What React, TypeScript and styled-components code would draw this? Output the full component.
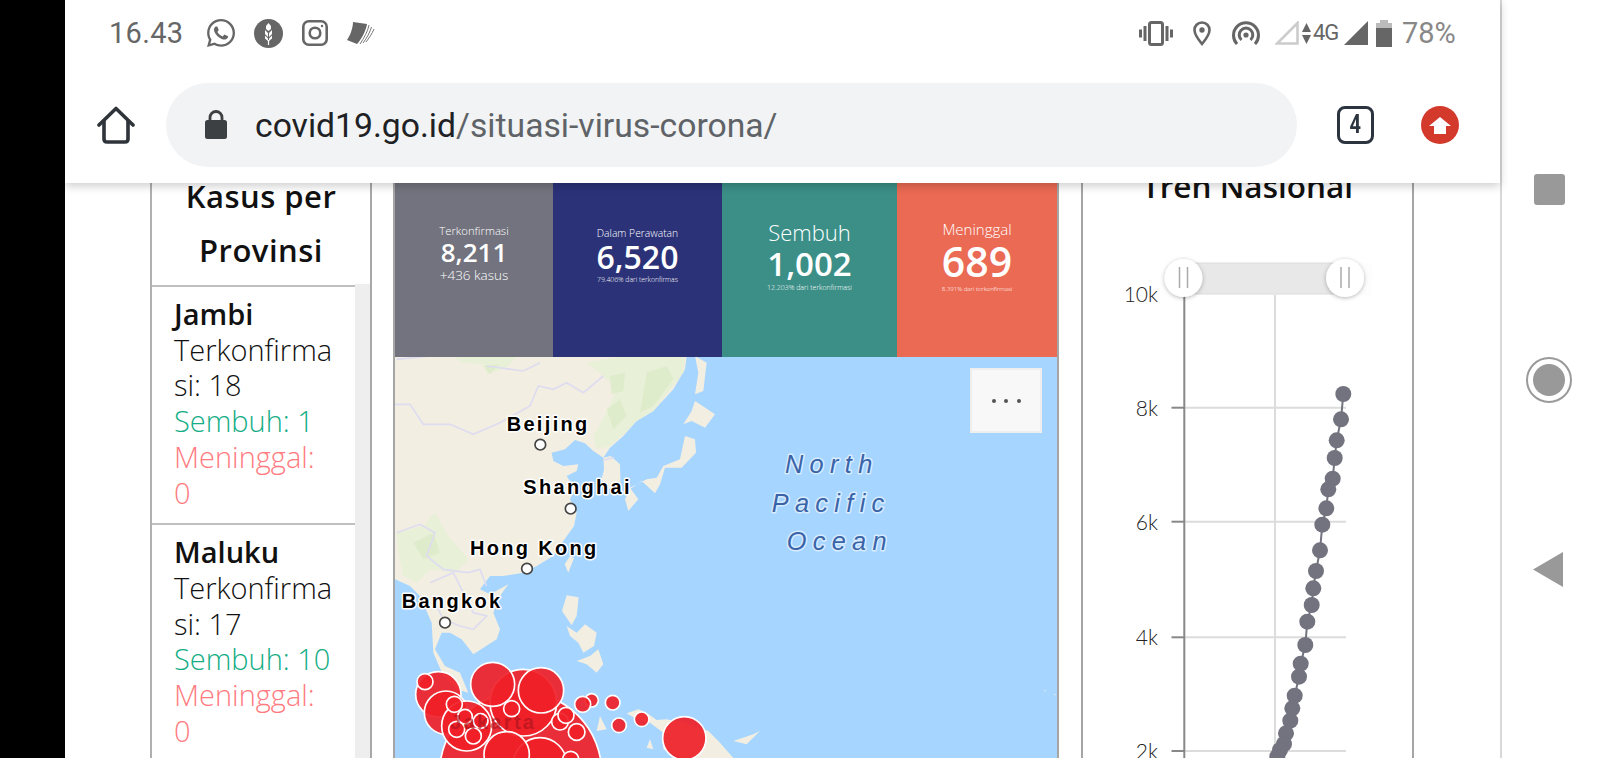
import React from "react";
import styled, { createGlobalStyle } from "styled-components";
import { FaWhatsapp } from "react-icons/fa";

const Global = createGlobalStyle`
  html, body { margin: 0; padding: 0; background: #fff; overflow: hidden; }
  * { box-sizing: border-box; }
`;

const Screen = styled.div`
  display: flex;
  width: 1600px;
  height: 758px;
  overflow: hidden;
  font-family: "Open Sans", "Liberation Sans", sans-serif;
`;
const BlackBar = styled.div`
  width: 65px;
  background: #000;
`;
const Phone = styled.div`
  display: flex;
  flex-direction: column;
  width: 1437px;
  border-right: 2px solid #d8d8d8;
`;
const Chrome = styled.header`
  position: relative;
  z-index: 2;
  height: 183px;
  flex: none;
  background: #fff;
  box-shadow: 0 3px 9px rgba(0, 0, 0, 0.2);
`;
const StatusBar = styled.div`
  display: flex;
  align-items: center;
  justify-content: space-between;
  height: 66px;
  padding: 0 44px 0 44px;
`;
const StatusGroup = styled.div`
  display: flex;
  align-items: center;
`;
const Time = styled.span`
  font: 400 29px/1 Roboto, sans-serif;
  letter-spacing: 0.3px;
  color: #666;
  width: 72px;
  margin-right: 25px;
`;
const Slot = styled.span<{ $gap?: number; $w: number }>`
  display: flex;
  width: ${(p) => p.$w}px;
  margin-right: ${(p) => p.$gap ?? 0}px;
  color: #666;
`;
const NetText = styled.span`
  font: 400 22px/1 Roboto, sans-serif;
  letter-spacing: -1.2px;
  color: #666;
  width: 26px;
  margin-right: 5px;
`;
const Percent = styled.span`
  font: 400 29px/1 Roboto, sans-serif;
  color: #888;
  width: 54px;
`;
const Toolbar = styled.div`
  display: flex;
  align-items: center;
  height: 85px;
  margin-top: 16px;
  padding-left: 32px;
`;
const HomeSlot = styled.span`
  display: flex;
  width: 38px;
  margin-right: 31px;
`;
const Omnibox = styled.div`
  display: flex;
  align-items: center;
  width: 1131px;
  height: 84px;
  border-radius: 42px;
  background: #f1f3f4;
  padding-left: 39px;
`;
const LockSlot = styled.span`
  display: flex;
  margin-right: 28px;
`;
const Url = styled.span`
  font: 400 33.7px/1 Roboto, sans-serif;
  padding-top: 2px;
  color: #5f6368;
  b { font-weight: 400; color: #202124; }
`;
const TabCount = styled.span`
  display: flex;
  align-items: center;
  justify-content: center;
  width: 37px;
  height: 38px;
  margin-left: 40px;
  border: 3px solid #2c3440;
  border-radius: 8px;
  color: #2c3440;
`;
const TabDigit = styled.span`
  display: block;
  font: 700 25px/1 Roboto, sans-serif;
  transform: scaleX(0.8);
`;
const UpdateBadge = styled.span`
  display: flex;
  width: 38px;
  height: 38px;
  margin-left: 47px;
  border-radius: 50%;
  background: #d33a2c;
`;

const Content = styled.main`
  flex: 1;
  min-height: 0;
  display: flex;
  padding-left: 85px;
  overflow: hidden;
`;
const ProvincePanel = styled.section`
  width: 222px;
  margin-right: 21px;
  border-left: 2px solid #b0b0b0;
  border-right: 2px solid #a8a8a8;
  display: flex;
  flex-direction: column;
`;
const PanelTitle = styled.h2`
  margin: -14px 0 0;
  padding: 0 0 8px;
  text-align: center;
  font: 600 31px/54px "Open Sans", sans-serif;
  letter-spacing: 0.5px;
  color: #111;
  border-bottom: 2px solid #c0c0c0;
`;
const ListArea = styled.div`
  flex: 1;
  display: flex;
  min-height: 0;
`;
const Rows = styled.div`
  flex: 1;
  min-width: 0;
`;
const Scrollbar = styled.div`
  width: 15px;
  margin-top: -3px;
  background: #eeeeee;
  position: relative;
`;
const ProvinceRow = styled.article`
  padding: 9px 22px 13px 22px;
  border-bottom: 2px solid #c0c0c0;
  font: 300 29px/35.7px "Open Sans", sans-serif;
  color: #111;
  overflow-wrap: anywhere;
`;
const ProvinceName = styled.div`
  font-weight: 600;
`;
const Recovered = styled.div`
  color: #14ad85;
`;
const Deceased = styled.div`
  color: #ff7b7f;
`;

const MapPanel = styled.section`
  width: 666px;
  margin-right: 22px;
  border-left: 2px solid #a5a5a5;
  border-right: 2px solid #a5a5a5;
  display: flex;
  flex-direction: column;
`;
const StatRow = styled.div`
  display: flex;
  height: 174px;
  flex: none;
`;
const Tile = styled.div<{ $bg: string; $w: number; $top: number }>`
  width: ${(p) => p.$w}px;
  background: ${(p) => p.$bg};
  color: #fff;
  padding-top: ${(p) => p.$top}px;
  display: flex;
  flex-direction: column;
  align-items: center;
  text-align: center;
  white-space: nowrap;
`;
const TileLabel = styled.div<{ $size: number }>`
  font: 300 ${(p) => p.$size}px/1.2 "Open Sans", sans-serif;
`;
const TileValue = styled.div<{ $size: number; $weight: number }>`
  font: ${(p) => p.$weight} ${(p) => p.$size}px/1.15 "Open Sans", sans-serif;
`;
const TileNote = styled.div<{ $size: number }>`
  font: 300 ${(p) => p.$size}px/1.3 "Open Sans", sans-serif;
`;
const MapFrame = styled.div`
  position: relative;
  flex: 1;
  background: #a6d5ff;
  overflow: hidden;
`;
const MapSvg = styled.svg`
  display: block;
`;
const MenuButton = styled.button`
  position: absolute;
  top: 11px;
  right: 15px;
  width: 72px;
  height: 65px;
  display: flex;
  align-items: center;
  justify-content: center;
  gap: 8.5px;
  padding: 0;
  background: #f8f8f8;
  border: 2px solid #eeeeee;
`;
const MenuDot = styled.span`
  width: 4px;
  height: 4px;
  border-radius: 50%;
  background: #555;
`;

const TrendPanel = styled.section`
  width: 333px;
  border-left: 2px solid #a5a5a5;
  border-right: 2px solid #a5a5a5;
  display: flex;
  flex-direction: column;
`;
const TrendTitle = styled.h2`
  margin: -12px 0 0;
  text-align: center;
  font: 600 31.5px/30px "Open Sans", sans-serif;
  color: #111;
`;
const ChartSvg = styled.svg`
  display: block;
  flex: none;
`;

const NavBar = styled.nav`
  flex: 1;
  display: flex;
  flex-direction: column;
  align-items: center;
  padding: 174px 4px 0 0;
`;
const NavSquare = styled.div`
  width: 31px;
  height: 31px;
  border-radius: 3px;
  background: #999;
`;
const NavRing = styled.div`
  width: 46px;
  height: 46px;
  margin-top: 152px;
  border-radius: 50%;
  border: 2px solid #9a9a9a;
  display: flex;
  align-items: center;
  justify-content: center;
`;
const NavDot = styled.div`
  width: 32px;
  height: 32px;
  border-radius: 50%;
  background: #999;
`;
const NavBack = styled.svg`
  margin-top: 149px;
  margin-right: 2px;
`;

const provinces = [
  { name: "Jambi", conf: "18", rec: "1", dead: "0" },
  { name: "Maluku", conf: "17", rec: "10", dead: "0" },
];

const dots: [number, number][] = [
  [1343.3, 394], [1341, 419.3], [1336.7, 440.3], [1334.7, 458], [1332.7, 478.7],
  [1328.3, 489.3], [1326.3, 508.3], [1322.3, 524.7], [1320, 550.3], [1316, 571],
  [1313.3, 588.3], [1311.7, 605], [1307.3, 621.7], [1305.3, 645], [1300.7, 663.7],
  [1299, 676.7], [1294.7, 695.7], [1292.3, 708.3], [1290.3, 720.7], [1286, 733.3],
  [1284, 744], [1280, 750], [1277.3, 756.7], [1274, 766],
];

const gridY = [407.7, 521.7, 637.3, 751];
const axisLabels: [string, number][] = [
  ["10k", 302], ["8k", 415.5], ["6k", 529.5], ["4k", 645], ["2k", 759],
];

const bubbles: [number, number, number][] = [
  [392, 1250, 243], [145, 1015, 68], [400, 1040, 100], [168, 1070, 65], [230, 1110, 75],
  [450, 1225, 80], [308, 985, 66], [453, 1003, 68], [350, 1195, 68], [883, 1147, 65],
  [605, 1033, 20], [668, 1040, 22], [578, 1045, 24], [687, 1108, 22], [755, 1090, 22],
  [510, 1097, 25], [528, 1078, 24], [560, 1128, 25], [365, 1058, 24], [105, 977, 24],
  [193, 1045, 24], [225, 1082, 22], [272, 1095, 22], [200, 1120, 24], [250, 1140, 24],
  [542, 1210, 24],
];

const MapDrawing = () => (
  <MapSvg width={662} height={401} viewBox="395 357 662 401">
    <g transform="translate(390 356) scale(0.33333)">
      <g fill="#f3eee2">
        <path d="M15 0 L890 0 L885 40 L850 100 L790 165 L740 195 L700 240 L660 275 L640 305 L610 285 L585 262 L555 252 L525 280 L485 290 L490 315 L520 330 L565 325 L560 345 L530 360 L555 400 L540 430 L560 470 L552 510 L520 555 L490 600 L440 630 L400 650 L340 660 L300 660 L270 700 L300 715 L355 685 L330 720 L310 770 L330 820 L320 850 L250 895 L215 850 L180 830 L155 830 L135 880 L165 930 L210 950 L235 1010 L200 1000 L160 960 L130 890 L125 800 L90 720 L60 690 L15 670Z" />
        <path d="M640 305 L662 300 L690 325 L692 395 L650 398 L635 370 L642 340Z" />
        <path d="M915 135 L975 175 L945 215 L905 195 L880 205 L905 165Z" />
        <path d="M885 240 L915 250 L918 290 L875 335 L825 335 L810 385 L795 412 L755 375 L722 398 L745 430 L715 465 L705 430 L720 395 L770 370 L800 365 L820 330 L870 310Z" />
        <path d="M915 0 L950 20 L940 105 L915 115 L925 50Z" />
        <path d="M540 600 L552 606 L535 650 L524 625Z" />
        <path d="M530 718 L566 724 L560 780 L545 808 L516 765Z" />
        <path d="M530 810 L560 830 L585 805 L620 830 L612 870 L580 890 L565 860 L540 840Z" />
        <path d="M560 915 L600 900 L625 880 L640 925 L620 950 L590 925Z" />
        <path d="M710 1072 L745 1060 L770 1070 L800 1092 L830 1090 L880 1100 L955 1125 L990 1160 L1030 1206 L880 1206 L820 1180 L820 1130 L780 1100 L740 1090Z" />
        <path d="M1030 1155 L1090 1135 L1110 1125 L1070 1165Z" />
        <path d="M630 1080 L650 1120 L620 1125Z" />
        <path d="M780 1150 L790 1180 L770 1175Z" />
        <circle cx="1965" cy="1004" r="2" />
        <circle cx="1995" cy="1016" r="2" />
      </g>
      <g fill="#e8f0d8">
        <path d="M190 0 L380 0 L350 35 L290 55 L280 25 L215 20Z" />
        <path d="M590 20 L700 0 L885 0 L880 50 L790 165 L740 195 L700 235 L660 270 L620 280 L610 240 L650 170 L680 100 L640 60Z" />
        <path d="M20 530 L100 510 L135 470 L175 540 L235 610 L195 650 L120 640 L80 680 L40 660 L25 590Z" />
      </g>
      <g fill="#dfeccb">
        <path d="M660 60 L705 50 L700 105 L665 115Z" />
        <path d="M770 50 L830 30 L850 70 L790 150 L750 170Z" />
        <path d="M650 160 L690 130 L710 180 L670 220Z" />
        <path d="M280 30 L330 25 L300 55Z" />
        <path d="M70 560 L130 530 L150 590 L100 610Z" />
      </g>
      <g fill="none" stroke="#dedcf0" strokeWidth="5">
        <path d="M15 145 L60 145 L100 205 L180 205 L250 235 L330 200 L420 150 L445 90 L490 100 L530 80 L580 110 L640 60" />
        <path d="M20 10 L120 0 M290 30 L400 45 L450 20" />
        <path d="M640 312 L672 305" />
        <path d="M20 530 L90 505 L135 530 L110 600 L160 640 L235 650 L270 640 L290 690" />
        <path d="M120 680 L190 650 L250 770 L290 780 L250 820 L210 810 L160 790 L125 720" />
      </g>
      <g fill="#f02028" fillOpacity="0.92" stroke="#fff" strokeWidth="5">
        {bubbles.map(([cx, cy, r], i) => (
          <circle key={i} cx={cx} cy={cy} r={r} />
        ))}
      </g>
      <text x="180" y="1118" fontFamily="'Liberation Sans', sans-serif" fontWeight="700" fontSize="60" letterSpacing="7" fill="#a8141c" fillOpacity="0.65">
        Jakarta
      </text>
      <g fontFamily="'Liberation Sans', sans-serif" fontWeight="700" fontSize="60" letterSpacing="7" fill="#000" stroke="#fff" strokeWidth="9" strokeLinejoin="round" paintOrder="stroke">
        <text x="350" y="225">Beijing</text>
        <text x="400" y="414">Shanghai</text>
        <text x="240" y="597">Hong Kong</text>
        <text x="35" y="756">Bangkok</text>
      </g>
      <g fill="#fff" stroke="#444" strokeWidth="5">
        <circle cx="451" cy="266" r="16" />
        <circle cx="542" cy="458" r="16" />
        <circle cx="411" cy="638" r="16" />
        <circle cx="165" cy="800" r="16" />
      </g>
    </g>
    <g transform="translate(700 356) scale(0.33333)" fontFamily="'Liberation Sans', sans-serif" fontStyle="italic" fontSize="76" letterSpacing="19" fill="#3a64a8" stroke="#d8ecff" strokeWidth="9" strokeLinejoin="round" paintOrder="stroke">
      <text x="255" y="350">North</text>
      <text x="215" y="467">Pacific</text>
      <text x="260" y="583">Ocean</text>
    </g>
  </MapSvg>
);

const ChartDrawing = () => (
  <ChartSvg width={329} height={557} viewBox="1083 201 329 557">
    <defs>
      <filter id="handle" x="-30%" y="-30%" width="160%" height="160%">
        <feDropShadow dx="0" dy="1" stdDeviation="2" floodColor="#000" floodOpacity="0.3" />
      </filter>
    </defs>
    <line x1="1275" x2="1275" y1="294" y2="758" stroke="#dcdcdc" strokeWidth="2" />
    {gridY.map((y) => (
      <g key={y}>
        <line x1="1184" x2="1346" y1={y} y2={y} stroke="#dcdcdc" strokeWidth="2" />
        <line x1="1171.5" x2="1184" y1={y} y2={y} stroke="#888" strokeWidth="2" />
      </g>
    ))}
    <line x1="1184.3" x2="1184.3" y1="294" y2="758" stroke="#888" strokeWidth="2" />
    <rect x="1183" y="263" width="189" height="32" fill="#fdfdfd" />
    <rect x="1183" y="263" width="162" height="31" fill="#e8e8e8" stroke="#dcdcdc" />
    {[1183.5, 1345].map((x) => (
      <g key={x}>
        <circle cx={x} cy="278" r="19" fill="#fff" filter="url(#handle)" />
        <path d={`M${x - 4} 267V288M${x + 4} 267V288`} stroke="#aaa" strokeWidth="1.5" />
      </g>
    ))}
    <g fontFamily="Lato, sans-serif" fontWeight="300" fontSize="21" fill="#222" textAnchor="end">
      {axisLabels.map(([t, y]) => (
        <text key={t} x="1158" y={y}>{t}</text>
      ))}
    </g>
    <polyline points={dots.map((d) => d.join(",")).join(" ")} fill="none" stroke="#72737e" strokeWidth="2" />
    {dots.map(([cx, cy], i) => (
      <circle key={i} cx={cx} cy={cy} r="8" fill="#72737e" />
    ))}
  </ChartSvg>
);

export default function App() {
  return (
    <>
      <Global />
      <Screen>
        <BlackBar />
        <Phone>
          <Chrome>
            <StatusBar>
              <StatusGroup>
                <Time>16.43</Time>
                <Slot $w={30} $gap={18}><FaWhatsapp size={32} /></Slot>
                <Slot $w={29} $gap={19}>
                  <svg width="29" height="29" viewBox="0 0 29 29">
                    <circle cx="14.5" cy="14.5" r="14.5" fill="#666" />
                    <path d="M14.5 4L17 7V10L14.5 12L12 10V7Z" fill="#fff" />
                    <path d="M11 11L14 14V18L11 15Z M18 11L15 14V18L18 15Z M11 16.5L14 19.5V22L11 19.5Z M18 16.5L15 19.5V22L18 19.5Z" fill="#fff" />
                    <path d="M14.5 21V26" stroke="#fff" strokeWidth="1.2" />
                  </svg>
                </Slot>
                <Slot $w={26} $gap={19}>
                  <svg width="26" height="26" viewBox="0 0 26 26" fill="none" stroke="#666" strokeWidth="2.6">
                    <rect x="1.3" y="1.3" width="23.4" height="23.4" rx="5.5" />
                    <circle cx="13" cy="13" r="5.3" />
                    <circle cx="20" cy="6" r="1.2" fill="#666" stroke="none" />
                  </svg>
                </Slot>
                <Slot $w={28}>
                  <svg width="28" height="23" viewBox="0 0 28 23" fill="none">
                    <path d="M6 0L20 2C19 8 15 17 10 22L0 18C3 14 6 6 6 0Z" fill="#666" />
                    <path d="M22 3C21 9 17 16 13 22M24.5 5C23 10 20 16 16 21M27 7C25 12 22 16 19 20" stroke="#777" strokeWidth="1" />
                  </svg>
                </Slot>
              </StatusGroup>
              <StatusGroup>
                <Slot $w={34} $gap={20}>
                  <svg width="34" height="25" viewBox="0 0 34 25" fill="#666">
                    <rect x="10.5" y="1.5" width="13" height="22" rx="2" fill="none" stroke="#666" strokeWidth="3" />
                    <rect x="4.5" y="5" width="3" height="15" />
                    <rect x="0" y="8.5" width="3" height="8" />
                    <rect x="26.5" y="5" width="3" height="15" />
                    <rect x="31" y="8.5" width="3" height="8" />
                  </svg>
                </Slot>
                <Slot $w={18} $gap={21}>
                  <svg width="18" height="25" viewBox="0 0 18 25" fill="none">
                    <path d="M9 1.5C4.5 1.5 1.5 5 1.5 9C1.5 14 9 23 9 23C9 23 16.5 14 16.5 9C16.5 5 13.5 1.5 9 1.5Z" stroke="#666" strokeWidth="2.6" />
                    <circle cx="9" cy="9" r="2.7" fill="#666" />
                  </svg>
                </Slot>
                <Slot $w={28} $gap={15}>
                  <svg width="28" height="24" viewBox="0 0 28 24" fill="none" stroke="#666" strokeWidth="3">
                    <path d="M5 23A12.5 12.5 0 1 1 23 23" />
                    <path d="M9.5 19A6.8 6.8 0 1 1 18.5 19" />
                    <circle cx="14" cy="14" r="2.6" fill="#666" stroke="none" />
                  </svg>
                </Slot>
                <Slot $w={24} $gap={3}>
                  <svg width="24" height="24" viewBox="0 0 24 24">
                    <path d="M2 22.5H22.5V2Z" fill="none" stroke="#ccc" strokeWidth="2.6" />
                  </svg>
                </Slot>
                <Slot $w={9} $gap={2}>
                  <svg width="9" height="21" viewBox="0 0 9 21" fill="#666">
                    <path d="M4.5 0L9 9H0Z" />
                    <path d="M0 12H9L4.5 21Z" />
                  </svg>
                </Slot>
                <NetText>4G</NetText>
                <Slot $w={24} $gap={8}>
                  <svg width="24" height="24" viewBox="0 0 24 24">
                    <path d="M0 24H24V0Z" fill="#666" />
                  </svg>
                </Slot>
                <Slot $w={16} $gap={10}>
                  <svg width="16" height="27" viewBox="0 0 16 27">
                    <rect x="4" y="0" width="8" height="4" fill="#bbb" />
                    <rect x="0" y="3" width="16" height="5" fill="#bbb" />
                    <rect x="0" y="8" width="16" height="19" fill="#666" />
                  </svg>
                </Slot>
                <Percent>78%</Percent>
              </StatusGroup>
            </StatusBar>
            <Toolbar>
              <HomeSlot>
                <svg width="38" height="38" viewBox="0 0 38 38" fill="none" stroke="#2f343a" strokeWidth="3.6" strokeLinejoin="round" strokeLinecap="round">
                  <path d="M2 19L19 2.5L36 19" />
                  <path d="M7 15V33Q7 36 10 36H28Q31 36 31 33V15" />
                </svg>
              </HomeSlot>
              <Omnibox>
                <LockSlot>
                  <svg width="22" height="29" viewBox="0 0 22 29">
                    <rect y="10" width="22" height="19" rx="2.5" fill="#3c4043" />
                    <path d="M5 11V7.5A6 6 0 0 1 17 7.5V11" fill="none" stroke="#3c4043" strokeWidth="2.8" />
                  </svg>
                </LockSlot>
                <Url><b>covid19.go.id</b>/situasi-virus-corona/</Url>
              </Omnibox>
              <TabCount><TabDigit>4</TabDigit></TabCount>
              <UpdateBadge>
                <svg width="38" height="38" viewBox="0 0 38 38">
                  <path d="M8 20L19 11L30 20H25V28H13V20Z" fill="#fff" />
                </svg>
              </UpdateBadge>
            </Toolbar>
          </Chrome>
          <Content>
            <ProvincePanel>
              <PanelTitle>Kasus per Provinsi</PanelTitle>
              <ListArea>
                <Rows>
                  {provinces.map((p) => (
                    <ProvinceRow key={p.name}>
                      <ProvinceName>{p.name}</ProvinceName>
                      <div>Terkonfirmasi: {p.conf}</div>
                      <Recovered>Sembuh: {p.rec}</Recovered>
                      <Deceased>Meninggal: {p.dead}</Deceased>
                    </ProvinceRow>
                  ))}
                </Rows>
                <Scrollbar />
              </ListArea>
            </ProvincePanel>
            <MapPanel>
              <StatRow>
                <Tile $bg="#72737e" $w={158} $top={41}>
                  <TileLabel $size={11.3}>Terkonfirmasi</TileLabel>
                  <TileValue $size={26} $weight={600}>8,211</TileValue>
                  <TileNote $size={13.5}>+436 kasus</TileNote>
                </Tile>
                <Tile $bg="#2b3278" $w={169} $top={44}>
                  <TileLabel $size={10.3}>Dalam Perawatan</TileLabel>
                  <TileValue $size={32} $weight={600}>6,520</TileValue>
                  <TileNote $size={6.8}>79.406% dari terkonfirmas</TileNote>
                </Tile>
                <Tile $bg="#3b8f87" $w={175} $top={36}>
                  <TileLabel $size={22}>Sembuh</TileLabel>
                  <TileValue $size={33} $weight={600}>1,002</TileValue>
                  <TileNote $size={7}>12.203% dari terkonfirmasi</TileNote>
                </Tile>
                <Tile $bg="#eb6a53" $w={160} $top={37}>
                  <TileLabel $size={15}>Meninggal</TileLabel>
                  <TileValue $size={41} $weight={600}>689</TileValue>
                  <TileNote $size={6.1}>8.391% dari terkonfirmasi</TileNote>
                </Tile>
              </StatRow>
              <MapFrame>
                <MapDrawing />
                <MenuButton aria-label="Menu">
                  <MenuDot />
                  <MenuDot />
                  <MenuDot />
                </MenuButton>
              </MapFrame>
            </MapPanel>
            <TrendPanel>
              <TrendTitle>Tren Nasional</TrendTitle>
              <ChartDrawing />
            </TrendPanel>
          </Content>
        </Phone>
        <NavBar>
          <NavSquare />
          <NavRing>
            <NavDot />
          </NavRing>
          <NavBack width="30" height="35" viewBox="0 0 30 35">
            <path d="M30 0V35L0 17.5Z" fill="#999" />
          </NavBack>
        </NavBar>
      </Screen>
    </>
  );
}
